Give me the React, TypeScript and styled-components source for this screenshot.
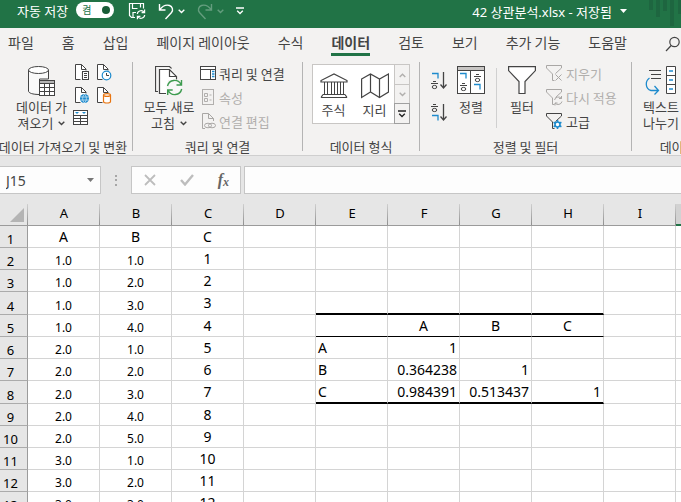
import React from "react";
import styled, { createGlobalStyle, css } from "styled-components";

const GREEN = "#217346";
const INK = "#444444";
const BLUE = "#1e8bcd";
const LINE = "#d4d4d4";

const Global = createGlobalStyle`
  * { box-sizing: border-box; }
  body { margin: 0; background: #fff; overflow: hidden; }
  body, button, input {
    font-family: "Noto Sans", "Noto Sans CJK KR", sans-serif;
    font-size: 13px;
    color: ${INK};
  }
  button { border: 0; padding: 0; background: none; }
  svg { display: block; flex: none; }
`;

const koreanText = css`
  &, button { font-family: "Noto Sans CJK KR", "Noto Sans", sans-serif; }
`;

const Window = styled.div`
  display: flex;
  flex-direction: column;
  height: 100vh;
  overflow: hidden;
`;

/* Title bar */
const TitleBar = styled.header`
  display: flex;
  align-items: flex-start;
  height: 28px;
  flex: none;
  padding-left: 17px;
  background: ${GREEN};
  color: #fff;
  line-height: 22px;
  white-space: nowrap;
`;
const AutoSave = styled.label`
  display: flex;
  gap: 8px;
`;
const Toggle = styled.button`
  display: flex;
  align-items: center;
  justify-content: space-between;
  width: 38px;
  height: 16px;
  margin: 2px 14px 0 0;
  padding: 0 4px 0 6px;
  border-radius: 8px;
  background: #fff;
  color: ${GREEN};
  font-size: 10px;
  line-height: 16px;
  &::after {
    content: "";
    width: 8px;
    height: 8px;
    border-radius: 4px;
    background: #185c37;
  }
`;
const QuickButton = styled.button<{ $dim?: boolean }>`
  display: flex;
  align-items: center;
  gap: 4px;
  height: 22px;
  margin-right: 12px;
  color: #fff;
  opacity: ${(p) => (p.$dim ? 0.3 : 1)};
`;
const DocTitle = styled.button`
  display: flex;
  align-items: center;
  gap: 8px;
  height: 22px;
  margin-left: auto;
  margin-right: 22px;
  color: #fff;
`;

/* Tabs */
const Tabs = styled.nav`
  ${koreanText}
  display: flex;
  gap: 28px;
  flex: none;
  height: 30px;
  padding: 3px 0 0 8px;
  background: #f3f2f1;
  white-space: nowrap;
`;
const Tab = styled.button<{ $active?: boolean }>`
  height: 25px;
  font-size: 14px;
  line-height: 22px;
  border-bottom: 3px solid transparent;
  ${(p) => p.$active && css`
    font-weight: 700;
    border-bottom-color: ${GREEN};
  `}
`;
const SearchButton = styled.button`
  margin-left: auto;
  height: 25px;
`;

/* Ribbon */
const Ribbon = styled.section`
  ${koreanText}
  display: flex;
  flex: none;
  height: 98px;
  background: #f3f2f1;
  border-bottom: 1px solid #cfcfcf;
  overflow: hidden;
`;
const Group = styled.div<{ $w: number }>`
  display: flex;
  flex-direction: column;
  flex: none;
  width: ${(p) => p.$w}px;
`;
const GroupBody = styled.div<{ $pad: number }>`
  display: flex;
  height: 81px;
  padding-left: ${(p) => p.$pad}px;
`;
const GroupLabel = styled.div<{ $shift?: boolean }>`
  display: flex;
  justify-content: center;
  padding-right: ${(p) => (p.$shift ? 6 : 0)}px;
  line-height: 16px;
  white-space: nowrap;
`;
const Divider = styled.div<{ $inner?: boolean }>`
  flex: none;
  width: 1px;
  height: ${(p) => (p.$inner ? 60 : 89)}px;
  margin-top: ${(p) => (p.$inner ? 10 : 4)}px;
  background: ${(p) => (p.$inner ? "#d0d0d0" : "#b4b4b4")};
`;
const BigButton = styled.button<{ $w: number }>`
  display: flex;
  flex-direction: column;
  align-items: center;
  width: ${(p) => p.$w}px;
  padding-top: 7px;
  line-height: 16px;
  white-space: nowrap;
  & > svg { margin-bottom: 2px; }
`;
const WithChevron = styled.span`
  display: flex;
  align-items: center;
  gap: 5px;
`;
const IconGrid = styled.div`
  display: grid;
  grid-template-columns: 18px 18px;
  grid-auto-rows: 18px;
  gap: 5px 4px;
  padding: 5px 0 0 4px;
`;
const List = styled.div`
  display: flex;
  flex-direction: column;
  padding: 3px 0 0 3px;
`;
const ListButton = styled.button<{ $off?: boolean }>`
  display: flex;
  align-items: center;
  gap: 2px;
  height: 24px;
  white-space: nowrap;
  color: ${(p) => (p.$off ? "#b1afad" : INK)};
`;
const SortPair = styled.div`
  display: flex;
  flex-direction: column;
  gap: 12px;
  padding-top: 13px;
  margin-right: 5px;
`;
const Gallery = styled.div`
  display: flex;
  width: 98px;
  height: 60px;
  margin-top: 6px;
  border: 1px solid #c8c6c4;
  background: #fff;
`;
const GalleryItem = styled.button`
  display: flex;
  flex-direction: column;
  align-items: center;
  gap: 3px;
  width: 41px;
  padding-top: 8px;
  line-height: 16px;
`;
const Scroller = styled.div`
  display: grid;
  grid-template-rows: 20px 19px 19px;
  width: 14px;
`;
const ScrollButton = styled.button<{ $strong?: boolean }>`
  display: flex;
  align-items: center;
  justify-content: center;
  background: #f3f2f1;
  color: ${(p) => (p.$strong ? "#222" : "#b1afad")};
  outline: 1px solid ${(p) => (p.$strong ? "#a0a0a0" : "#c8c6c4")};
`;

/* Formula bar */
const FormulaBar = styled.div`
  display: flex;
  flex: none;
  height: 48px;
  padding: 10px 0;
  background: #e6e6e6;
`;
const NameBox = styled.div`
  display: flex;
  align-items: center;
  width: 101px;
  border: 1px solid #c6c6c6;
  border-left: 0;
  background: #fdfdfd;
`;
const NameInput = styled.input`
  flex: 1;
  min-width: 0;
  padding: 0 0 0 6px;
  border: 0;
  background: none;
  font-size: 14px;
`;
const NameArrow = styled.button`
  padding-right: 6px;
  color: #777;
`;
const Grip = styled.div`
  display: flex;
  align-items: center;
  justify-content: center;
  width: 30px;
`;
const EditButtons = styled.div`
  display: flex;
  align-items: center;
  justify-content: space-between;
  width: 110px;
  margin-right: 3px;
  padding: 0 11px 0 12px;
  border: 1px solid #c6c6c6;
  background: #fdfdfd;
`;
const FormulaInput = styled.input`
  flex: 1;
  min-width: 0;
  border: 1px solid #c6c6c6;
  border-right: 0;
  border-radius: 0;
  background: #fdfdfd;
`;

/* Grid */
const SheetArea = styled.main`
  flex: 1;
  min-height: 0;
  overflow: hidden;
`;
const Sheet = styled.table`
  table-layout: fixed;
  width: 748px;
  border-spacing: 0;
  border-collapse: separate;
  color: #000;
`;
const RowHeadCol = styled.col`
  width: 28px;
`;
const DataCol = styled.col`
  width: 72px;
`;
const ColHead = styled.th<{ $selected?: boolean }>`
  height: 22px;
  padding: 0 0 3px;
  font-weight: 400;
  font-size: 13px;
  line-height: 16px;
  border-bottom: ${(p) => (p.$selected ? `2px solid ${GREEN}` : "1px solid #9b9b9b")};
  background: linear-gradient(#cfcfcf, #8f8f8f) right / 1px 100% no-repeat
    ${(p) => (p.$selected ? "#d2d2d2" : "#e6e6e6")};
`;
const Corner = styled(ColHead)`
  padding: 0 0 0 9px;
`;
const Row = styled.tr<{ $h: number }>`
  height: ${(p) => p.$h}px;
`;
const RowHead = styled.th`
  padding: 0 6px 0 0;
  font-weight: 400;
  font-size: 13px;
  line-height: 16px;
  vertical-align: bottom;
  background: #e6e6e6;
  border-right: 1px solid #9b9b9b;
  border-bottom: 1px solid #ababab;
`;
const Cell = styled.td<{ $align?: string; $small?: boolean; $rule?: number }>`
  padding: 0 2px;
  font-size: ${(p) => (p.$small ? 12 : 14)}px;
  line-height: ${(p) => (p.$small ? 16 : 20)}px;
  vertical-align: ${(p) => (p.$small ? "bottom" : "middle")};
  text-align: ${(p) => p.$align ?? "center"};
  border-right: 1px solid ${LINE};
  border-bottom: ${(p) => (p.$rule ? `${p.$rule}px solid #000` : `1px solid ${LINE}`)};
`;

/* Icons */
const Chevron = () => (
  <svg width="7" height="5" viewBox="0 0 7 5" fill="none" stroke="currentColor" strokeWidth="1.4">
    <path d="M.7.8 3.5 3.6 6.3.8" />
  </svg>
);

const SaveIcon = () => (
  <svg width="18" height="18" viewBox="0 0 18 18" fill="none" stroke="#fff" strokeWidth="1.2">
    <path d="M7 15.5H3.5l-2-2V1.5h14v5M4.5 1.5v5h5M12.5 1.5v4M5 15.5v-5h3" />
    <path d="M9.3 12a3.8 3.8 0 0 1 7-1.5M16.6 7.5v3.2h-3M16.7 13a3.8 3.8 0 0 1-7 1.5M9.4 17.3v-3h3" />
  </svg>
);
const UndoIcon = ({ flip }: { flip?: boolean }) => (
  <svg width="16" height="17" viewBox="0 0 16 17" fill="none" stroke="#fff" strokeWidth="1.4">
    <g transform={flip ? "translate(16 0) scale(-1 1)" : undefined}>
      <path d="M1.5 1v6h6M1.8 6.7C4.5 3 8 1.500 11.500 2.500c3 1 4 4.500 2 7L7.500 16" />
    </g>
  </svg>
);
const CustomizeIcon = () => (
  <svg width="8" height="8" viewBox="0 0 8 8" fill="none" stroke="currentColor" strokeWidth="1.3">
    <path d="M0 1h8M1.200 3.800 4 6.500 6.800 3.800" />
  </svg>
);
const TitleStripes = () => (
  <svg width="32" height="28" viewBox="0 0 32 28" fill="#1e6640">
    <path d="M0 0h4v10H0zM7 0h4v17H7zM14 0h4v11h-4zM21 0h4v26h-4zM29 0h3v14h-3z" />
  </svg>
);
const SearchIcon = () => (
  <svg width="16" height="16" viewBox="0 0 16 16" fill="none" stroke={INK} strokeWidth="1.200">
    <circle cx="9.500" cy="6" r="4.700" />
    <path d="M6.200 9.500 1 15" />
  </svg>
);
const DatabaseIcon = () => (
  <svg width="28" height="32" viewBox="0 0 28 32" fill="none" stroke={INK}>
    <path d="M.5 5v21c0 2 4 3.500 11 3.500V14h9V5" fill="#fafafa" />
    <ellipse cx="10.500" cy="5" rx="10" ry="3.500" fill="#fff" />
    <rect x="11.500" y="15.500" width="15" height="15" fill="#fff" />
    <path d="M12 16h14v2H12z" fill="#b5b5b5" stroke="none" />
    <path d="M11.500 18.500h15M11.500 22.500h15M11.500 26.500h15M16.500 18.500v12M21.500 18.500v12" />
  </svg>
);
const SmallDoc = ({ children }: { children?: React.ReactNode }) => (
  <svg width="18" height="18" viewBox="0 0 18 18" fill="none" stroke={INK}>
    <path d="M8 16.500H2.500v-15h6l5 5V9H8z" fill="#fff" stroke="none" />
    <path d="M7.500 16.500h-5v-15h6l4.500 4.500v1.500M8.500 1.500v5H13" />
    {children}
  </svg>
);
const TextBadge = () => (
  <g>
    <rect x="9.500" y="8.500" width="6" height="8" fill="#fff" />
    <path d="M11 10.500h3M11 12.500h3M11 14.500h3" />
  </g>
);
const ClockBadge = () => (
  <g stroke={BLUE}>
    <circle cx="11.500" cy="12.500" r="4.300" fill="#fff" strokeWidth="1.200" />
    <path d="M11.500 10v2.500H14" stroke={INK} />
  </g>
);
const GlobeBadge = () => (
  <g>
    <circle cx="11.500" cy="12.500" r="4.500" fill={BLUE} stroke="none" />
    <path d="M7.500 11h8M7.500 14h8M11.500 8c-2.500 3-2.500 6 0 9M11.500 8c2.500 3 2.500 6 0 9" stroke="#d8edf8" strokeWidth=".7" />
  </g>
);
const CylinderBadge = () => (
  <g stroke="#e87511" strokeWidth="1.200">
    <path d="M8.500 9v6.500c0 2 7 2 7 0V9" fill="#fff" />
    <ellipse cx="12" cy="9" rx="3.500" ry="1.400" fill="#fff" />
  </g>
);
const TableIcon = () => (
  <svg width="18" height="18" viewBox="0 0 18 18" fill="none" stroke={INK}>
    <rect x=".5" y="1.500" width="14" height="14" fill="#fff" />
    <path d="M.5 6.500h14M.5 9.500h14M.5 12.500h14M7.500 6.500v9" />
    <path d="M2 3h4L4 5zM9 3h4l-2 2z" fill={BLUE} stroke="none" />
  </svg>
);
const RefreshAllIcon = () => (
  <svg width="28" height="32" viewBox="0 0 28 32" fill="none" stroke={INK}>
    <path d="M3 26.500H.5V1.500h14l2 2" strokeWidth="1.200" />
    <path d="M11 29.500H4.500v-26h11l6.500 6.500V15h-9z" fill="#fff" stroke="none" />
    <path d="M11 28.500H4.500v-24h10l7 7v3M14.500 4.500v7H21" strokeWidth="1.200" />
    <circle cx="19.500" cy="22.500" r="8" fill="#f8f8f8" stroke="none" />
    <path d="M12.500 21a7.200 7.200 0 0 1 13.500-1.500M26.500 15v5h-5M26.700 24a7.200 7.200 0 0 1-13.500 1.500M12.700 30v-5h5" stroke="#3d9b4f" strokeWidth="1.400" />
  </svg>
);
const QueriesIcon = () => (
  <svg width="17" height="16" viewBox="0 0 17 16" fill="none" stroke={INK}>
    <rect x=".5" y="1.500" width="15" height="13" fill="#fff" />
    <path d="M.5 4.500h15M10.500 4.500v10" />
    <path d="M12 6.500h2.500M12 9h2.500M12 11.500h2.500" stroke={BLUE} strokeWidth="1.400" />
  </svg>
);
const PropertiesIcon = () => (
  <svg width="17" height="16" viewBox="0 0 17 16" fill="none" stroke="#b1afad">
    <rect x="2.500" y=".5" width="11" height="15" />
    <path d="M4.500 4.500h3v3h-3zM4.500 9.500h3v3h-3zM9.500 6h2M9.500 11h2" />
  </svg>
);
const EditLinksIcon = () => (
  <svg width="17" height="18" viewBox="0 0 17 18" fill="none" stroke="#a9a7a5">
    <path d="M5 16.500H2.500v-15h6l5 5V9M8.500 1.500v5h5" />
    <ellipse cx="8" cy="13.500" rx="3.500" ry="2.300" />
    <ellipse cx="12" cy="13.500" rx="3.500" ry="2.300" />
  </svg>
);
const BankIcon = () => (
  <svg width="28" height="26" viewBox="0 0 28 26" fill="none" stroke={INK} strokeWidth="1.200">
    <path d="M1 9V7.500L14 1l13 6.500V9zM3 21.500h22M1 24.500h26M3 21.500l-2 3M25 21.500l2 3" />
    <path d="M4.500 9v12.500M7.500 9v12.500M11.500 9v12.500M14.500 9v12.500M17.500 9v12.500M20.500 9v12.500M23.500 9v12.500" strokeWidth="1" />
  </svg>
);
const MapIcon = () => (
  <svg width="28" height="26" viewBox="0 0 28 26" fill="none" stroke={INK} strokeWidth="1.200">
    <path d="M.6 6 9.500 1l9 5 9-5v18l-9 5.500-9-5.500-8.900 5.500zM9.500 1v18M18.500 6v18.500" />
  </svg>
);
/* A giyeok over a hieut, or the reverse, beside a down arrow. */
const HieutMark = ({ x, y }: { x: number; y: number }) => (
  <g transform={`translate(${x} ${y})`} stroke={INK}>
    <path d="M2 .5h3M0 2.500h7" />
    <ellipse cx="3.500" cy="6" rx="2.300" ry="1.600" />
  </g>
);
const GiyeokMark = ({ x, y }: { x: number; y: number }) => (
  <path transform={`translate(${x} ${y})`} d="M0 .5h6v5" stroke={BLUE} strokeWidth="1.300" />
);
const SortIcon = ({ desc }: { desc?: boolean }) => (
  <svg width="17" height="20" viewBox="0 0 17 20" fill="none">
    <GiyeokMark x={1} y={desc ? 12 : 2} />
    <HieutMark x={0} y={desc ? 1 : 10} />
    <path d="M12.500 1v16M9.500 13.500l3 3.500 3-3.500" stroke={INK} strokeWidth="1.300" />
  </svg>
);
const SortDialogIcon = () => (
  <svg width="28" height="32" viewBox="0 0 28 32" fill="none" stroke={INK}>
    <rect x=".5" y="1.500" width="27" height="27" fill="#fff" />
    <path d="M1 2h26v3H1z" fill="#c8c6c4" stroke="none" />
    <path d="M.5 5.500h27M13.500 5.500v23" />
    <GiyeokMark x={3} y={8} />
    <HieutMark x={3} y={18} />
    <HieutMark x={17} y={9} />
    <GiyeokMark x={17} y={19} />
  </svg>
);
const FilterIcon = () => (
  <svg width="28" height="32" viewBox="0 0 28 32" fill="none" stroke={INK} strokeWidth="1.200">
    <path d="M.6 1.600h26.800v4L17 16.500v12h-6v-12L.6 5.600z" fill="#fff" />
  </svg>
);
const SmallFilter = ({ off, children }: { off?: boolean; children: React.ReactNode }) => (
  <svg width="18" height="18" viewBox="0 0 18 18" fill="none" stroke={off ? "#a9a7a5" : INK}>
    <path d="M9.500 9.500 15.500 4V1.500H.5V4l6 6v6.500h2" />
    {children}
  </svg>
);
const ClearFilterIcon = () => (
  <SmallFilter off><path d="m9.500 10.500 6 6M15.500 10.500l-6 6" /></SmallFilter>
);
const ReapplyIcon = () => (
  <SmallFilter off>
    <path d="M8.500 12a4 4 0 0 1 7-1.500V8M15.500 10.500H13M16 13.500a4 4 0 0 1-7 1.500v2.500M9 15h2.500" />
  </SmallFilter>
);
const AdvancedIcon = () => (
  <SmallFilter>
    <g stroke={BLUE} strokeWidth="1.600">
      <circle cx="11.500" cy="12.500" r="2.500" fill="#fff" />
      <path d="M11.500 8v2M11.500 15v2M7.600 10.300l1.800 1M13.600 13.700l1.800 1M7.600 14.700l1.800-1M13.600 11.300l1.800-1" />
    </g>
  </SmallFilter>
);
const TextToColumnsIcon = () => (
  <svg width="32" height="32" viewBox="0 0 32 32" fill="none" stroke={INK}>
    <path d="M4 5.500h12M6 9.500h10M6 13.500h10" />
    <path d="M4.500 13C0 16 0 24 6 25.500h7M9.500 21l4 4.500-4 4" stroke={BLUE} strokeWidth="1.300" />
    <path d="M21.500 1.500h9v27h-9zM21.500 10.500h9M21.500 19.500h9" fill="#fff" />
    <path d="M24 6h4M24 15h4M24 24h4" stroke={BLUE} strokeWidth="1.300" />
  </svg>
);
const UpChevron = () => (
  <svg width="7" height="5" viewBox="0 0 7 5" fill="none" stroke="currentColor" strokeWidth="1.4">
    <path d="M.7 4 3.500 1.200 6.300 4" />
  </svg>
);
const DownTriangle = () => (
  <svg width="7" height="4" viewBox="0 0 7 4" fill="currentColor"><path d="M0 0h7L3.500 4z" /></svg>
);
const CancelIcon = () => (
  <svg width="12" height="12" viewBox="0 0 12 12" stroke="#bdbdbd" strokeWidth="1.800"><path d="m1 1 10 10M11 1 1 11" /></svg>
);
const CheckIcon = () => (
  <svg width="14" height="12" viewBox="0 0 14 12" fill="none" stroke="#bdbdbd" strokeWidth="2.400"><path d="m1 6 4 4.500L13 1" /></svg>
);
const GripIcon = () => (
  <svg width="2" height="11" viewBox="0 0 2 11" fill="#a6a6a6"><path d="M0 0h2v2H0zM0 4h2v2H0zM0 9h2v2H0z" /></svg>
);
const FxMark = styled.span`
  font-family: "Liberation Serif", serif;
  font-style: italic;
  font-weight: 700;
  font-size: 16px;
  color: #666;
  sub { font-size: 12px; line-height: 0; vertical-align: -1px; }
`;
const Spacer = styled.div<{ $w?: number }>`
  width: ${(p) => p.$w ?? 7}px;
`;

function ListRow({ icon, off, children }: { icon: React.ReactNode; off?: boolean; children: React.ReactNode }) {
  return <ListButton $off={off} disabled={off}>{icon}{children}</ListButton>;
}

const tabs = ["파일", "홈", "삽입", "페이지 레이아웃", "수식", "데이터", "검토", "보기", "추가 기능", "도움말"];
const columns = ["A", "B", "C", "D", "E", "F", "G", "H", "I"];
const rows: string[][] = [
  ["A", "B", "C"],
  ["1.0", "1.0", "1"],
  ["1.0", "2.0", "2"],
  ["1.0", "3.0", "3"],
  ["1.0", "4.0", "4", "", "", "A", "B", "C"],
  ["2.0", "1.0", "5", "", "A", "1"],
  ["2.0", "2.0", "6", "", "B", "0.364238", "1"],
  ["2.0", "3.0", "7", "", "C", "0.984391", "0.513437", "1"],
  ["2.0", "4.0", "8"],
  ["2.0", "5.0", "9"],
  ["3.0", "1.0", "10"],
  ["3.0", "2.0", "11"],
  ["3.0", "3.0", "12"],
];
const tallRows = [4, 8];
const ruleBelow: Record<number, number> = { 4: 2, 5: 1, 8: 2 };

const alignOf = (row: number, col: number) => {
  if (row >= 6 && col === 4) return "left";
  if (row >= 6 && col > 4) return "right";
  return "center";
};

export default function App() {
  return (
    <Window>
      <Global />
      <TitleBar>
        <AutoSave htmlFor="autosave">자동 저장
          <Toggle id="autosave" role="switch" aria-checked="true">켬</Toggle>
        </AutoSave>
        <QuickButton aria-label="저장"><SaveIcon /></QuickButton>
        <QuickButton aria-label="실행 취소"><UndoIcon /><Chevron /></QuickButton>
        <QuickButton aria-label="다시 실행" $dim><UndoIcon flip /><Chevron /></QuickButton>
        <QuickButton aria-label="빠른 실행 도구 모음 사용자 지정"><CustomizeIcon /></QuickButton>
        <DocTitle>42 상관분석.xlsx - 저장됨 <DownTriangle /></DocTitle>
        <TitleStripes />
      </TitleBar>

      <Tabs>
        {tabs.map((t) => <Tab key={t} $active={t === "데이터"}>{t}</Tab>)}
        <SearchButton aria-label="검색"><SearchIcon /></SearchButton>
      </Tabs>

      <Ribbon>
        <Group $w={132}>
          <GroupBody $pad={14}>
            <BigButton $w={55}>
              <DatabaseIcon />
              <span>데이터 가</span>
              <WithChevron>져오기 <Chevron /></WithChevron>
            </BigButton>
            <IconGrid>
              <button aria-label="텍스트/CSV"><SmallDoc><TextBadge /></SmallDoc></button>
              <button aria-label="최근 원본"><SmallDoc><ClockBadge /></SmallDoc></button>
              <button aria-label="웹"><SmallDoc><GlobeBadge /></SmallDoc></button>
              <button aria-label="기존 연결"><SmallDoc><CylinderBadge /></SmallDoc></button>
              <button aria-label="테이블/범위에서"><TableIcon /></button>
            </IconGrid>
          </GroupBody>
          <GroupLabel $shift>데이터 가져오기 및 변환</GroupLabel>
        </Group>
        <Divider />

        <Group $w={169}>
          <GroupBody $pad={8}>
            <BigButton $w={56}>
              <RefreshAllIcon />
              <span>모두 새로</span>
              <WithChevron>고침 <Chevron /></WithChevron>
            </BigButton>
            <List>
              <ListRow icon={<QueriesIcon />}>쿼리 및 연결</ListRow>
              <ListRow icon={<PropertiesIcon />} off>속성</ListRow>
              <ListRow icon={<EditLinksIcon />} off>연결 편집</ListRow>
            </List>
          </GroupBody>
          <GroupLabel>쿼리 및 연결</GroupLabel>
        </Group>
        <Divider />

        <Group $w={116}>
          <GroupBody $pad={9}>
            <Gallery>
              <GalleryItem><BankIcon />주식</GalleryItem>
              <GalleryItem><MapIcon />지리</GalleryItem>
              <Scroller>
                <ScrollButton aria-label="위로"><UpChevron /></ScrollButton>
                <ScrollButton aria-label="아래로"><Chevron /></ScrollButton>
                <ScrollButton aria-label="자세히" $strong><CustomizeIcon /></ScrollButton>
              </Scroller>
            </Gallery>
          </GroupBody>
          <GroupLabel>데이터 형식</GroupLabel>
        </Group>
        <Divider />

        <Group $w={211}>
          <GroupBody $pad={11}>
            <SortPair>
              <button aria-label="오름차순 정렬"><SortIcon /></button>
              <button aria-label="내림차순 정렬"><SortIcon desc /></button>
            </SortPair>
            <BigButton $w={36}><SortDialogIcon />정렬</BigButton>
            <Spacer />
            <Divider $inner />
            <Spacer />
            <BigButton $w={36}><FilterIcon />필터</BigButton>
            <Spacer $w={3} />
            <List>
              <ListRow off icon={<ClearFilterIcon />}>지우기</ListRow>
              <ListRow off icon={<ReapplyIcon />}>다시 적용</ListRow>
              <ListRow icon={<AdvancedIcon />}>고급</ListRow>
            </List>
          </GroupBody>
          <GroupLabel>정렬 및 필터</GroupLabel>
        </Group>
        <Divider />

        <Group $w={118}>
          <GroupBody $pad={8}>
            <BigButton $w={42}>
              <TextToColumnsIcon />
              <span>텍스트</span>
              <span>나누기</span>
            </BigButton>
          </GroupBody>
          <GroupLabel>데이터 도구</GroupLabel>
        </Group>
      </Ribbon>

      <FormulaBar>
        <NameBox>
          <NameInput aria-label="이름 상자" defaultValue="J15" />
          <NameArrow aria-label="이름 목록"><DownTriangle /></NameArrow>
        </NameBox>
        <Grip><GripIcon /></Grip>
        <EditButtons>
          <button aria-label="취소"><CancelIcon /></button>
          <button aria-label="입력"><CheckIcon /></button>
          <button aria-label="함수 삽입"><FxMark>f<sub>x</sub></FxMark></button>
        </EditButtons>
        <FormulaInput aria-label="수식 입력줄" />
      </FormulaBar>

      <SheetArea>
        <Sheet>
          <colgroup>
            <RowHeadCol />
            {columns.map((c) => <DataCol key={c} />)}
            <DataCol />
          </colgroup>
          <thead>
            <tr>
              <Corner aria-label="모두 선택">
                <svg width="15" height="14" viewBox="0 0 15 14" fill="#b4b4b4"><path d="M15 0v14H1z" /></svg>
              </Corner>
              {columns.map((c) => <ColHead key={c} scope="col">{c}</ColHead>)}
              <ColHead $selected scope="col">J</ColHead>
            </tr>
          </thead>
          <tbody>
            {rows.map((values, r) => {
              const n = r + 1;
              return (
                <Row key={n} $h={tallRows.includes(n) ? 23 : 22}>
                  <RowHead scope="row">{n}</RowHead>
                  {[...columns, "J"].map((c, i) => (
                    <Cell
                      key={c}
                      $small={n > 1 && i < 2}
                      $align={alignOf(n, i)}
                      $rule={i >= 4 && i <= 7 ? ruleBelow[n] : undefined}
                    >
                      {values[i]}
                    </Cell>
                  ))}
                </Row>
              );
            })}
          </tbody>
        </Sheet>
      </SheetArea>
    </Window>
  );
}
